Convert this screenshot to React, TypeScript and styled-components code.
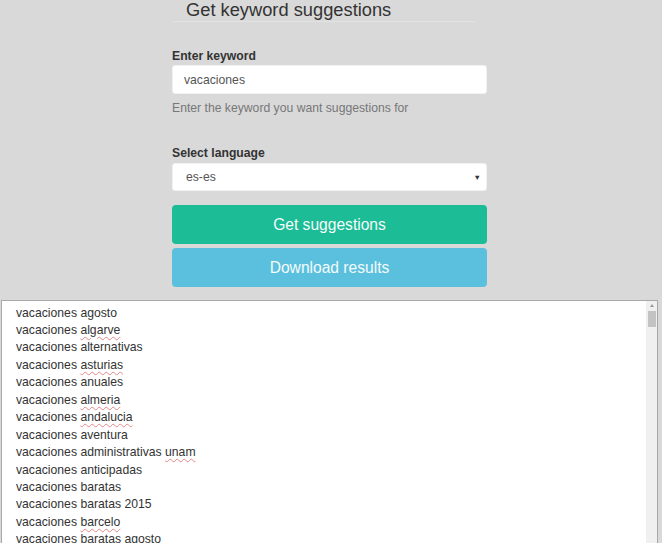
import React from "react";
import styled, { createGlobalStyle } from "styled-components";

const GlobalStyle = createGlobalStyle`
  html, body {
    margin: 0;
    padding: 0;
    background: #d9d9d9;
    overflow: hidden;
  }
  body {
    font-family: "Liberation Sans", Arial, sans-serif;
    color: #333;
  }
`;

const TYPOS = new Set(["algarve", "asturias", "almeria", "andalucia", "unam", "barcelo"]);

const LINES = [
  "vacaciones agosto",
  "vacaciones algarve",
  "vacaciones alternativas",
  "vacaciones asturias",
  "vacaciones anuales",
  "vacaciones almeria",
  "vacaciones andalucia",
  "vacaciones aventura",
  "vacaciones administrativas unam",
  "vacaciones anticipadas",
  "vacaciones baratas",
  "vacaciones baratas 2015",
  "vacaciones barcelo",
  "vacaciones baratas agosto",
  "vacaciones baratas septiembre",
  "vacaciones baratas octubre",
];

const Page = styled.div`
  display: flex;
  flex-direction: column;
  height: 543px;
`;

const Form = styled.form`
  width: 315px;
  margin: 0 0 0 172px;
  display: flex;
  flex-direction: column;
`;

const Title = styled.h3`
  margin: 0;
  width: 290px;
  padding: 0 0 2px 14px;
  font-size: 18.3px;
  font-weight: 400;
  line-height: 19px;
  color: #333;
  border-bottom: 1px solid #e2e2e2;
`;

const Label = styled.label<{ $gap: number }>`
  display: block;
  margin-top: ${(p) => p.$gap}px;
  font-size: 12.2px;
  font-weight: 700;
  line-height: 17px;
  color: #333;
`;

const Field = styled.input`
  box-sizing: border-box;
  width: 100%;
  height: 29px;
  margin: 0;
  padding: 0 0 0 11px;
  border: 1px solid #f1f1f1;
  border-radius: 3px;
  background: #fff;
  font-family: "Liberation Sans", Arial, sans-serif;
  font-size: 12.2px;
  color: #555;
  outline: none;
`;

const Help = styled.p`
  margin: 6px 0 0;
  font-size: 12.2px;
  line-height: 17px;
  color: #777;
`;

const SelectWrap = styled.div`
  position: relative;
  margin-top: 1px;

  &::after {
    content: "▼";
    position: absolute;
    right: 6px;
    top: 50%;
    transform: translateY(-50%);
    font-size: 7.5px;
    color: #333;
    pointer-events: none;
  }
`;

const Select = styled.select`
  box-sizing: border-box;
  appearance: none;
  width: 100%;
  height: 28px;
  margin: 0;
  padding: 0 0 0 13px;
  border: 1px solid #f1f1f1;
  border-radius: 3px;
  background: #fff;
  font-family: "Liberation Sans", Arial, sans-serif;
  font-size: 12.2px;
  color: #555;
  outline: none;
`;

const Button = styled.button<{ $tone: "green" | "blue"; $gap: number }>`
  height: 39px;
  margin-top: ${(p) => p.$gap}px;
  border: 0;
  border-radius: 4px;
  background: ${(p) => (p.$tone === "green" ? "#1bbc96" : "#5bc0de")};
  color: #f4fbfa;
  font-family: "Liberation Sans", Arial, sans-serif;
  font-size: 15.6px;
  cursor: pointer;
`;

const Results = styled.div`
  box-sizing: border-box;
  flex: none;
  display: flex;
  height: 262px;
  margin: 13px 4px 0 1px;
  border: 1px solid #a9a9a9;
  background: #fff;
  overflow: hidden;
`;

const List = styled.div`
  flex: 1;
  min-width: 0;
  overflow: hidden;
  padding: 3.5px 0 0 14px;
  font-size: 12.2px;
  line-height: 17.46px;
  color: #333;
`;

const ScrollTrack = styled.div`
  flex: none;
  width: 11px;
  display: flex;
  flex-direction: column;
  align-items: center;
  background: #f0f0f0;
`;

const ScrollArrow = styled.div`
  width: 100%;
  height: 9px;
  display: flex;
  align-items: center;
  justify-content: center;

  &::before {
    content: "";
    border-left: 2.5px solid transparent;
    border-right: 2.5px solid transparent;
    border-bottom: 3px solid #9a9a9a;
  }
`;

const ScrollThumb = styled.div`
  width: 8px;
  height: 16px;
  margin-top: 1px;
  background: #c3c3c3;
`;

const Line = styled.div`
  white-space: nowrap;
`;

const Typo = styled.span`
  text-decoration: underline wavy rgba(215, 80, 80, 0.65);
  text-decoration-thickness: 1px;
  text-underline-offset: 2px;
`;

const renderLine = (text: string) =>
  text.split(" ").map((word, i) => (
    <React.Fragment key={i}>
      {i > 0 && " "}
      {TYPOS.has(word) ? <Typo>{word}</Typo> : word}
    </React.Fragment>
  ));

export default function App() {
  return (
    <>
      <GlobalStyle />
      <Page>
        <Form onSubmit={(e) => e.preventDefault()}>
          <Title>Get keyword suggestions</Title>
          <Label $gap={26}>Enter keyword</Label>
          <Field defaultValue="vacaciones" />
          <Help>Enter the keyword you want suggestions for</Help>
          <Label $gap={28}>Select language</Label>
          <SelectWrap>
            <Select defaultValue="es-es">
              <option value="es-es">es-es</option>
              <option value="en-us">en-us</option>
            </Select>
          </SelectWrap>
          <Button type="submit" $tone="green" $gap={14}>
            Get suggestions
          </Button>
          <Button type="button" $tone="blue" $gap={4}>
            Download results
          </Button>
        </Form>
        <Results>
          <List>
            {LINES.map((l, i) => (
              <Line key={i}>{renderLine(l)}</Line>
            ))}
          </List>
          <ScrollTrack>
            <ScrollArrow />
            <ScrollThumb />
          </ScrollTrack>
        </Results>
      </Page>
    </>
  );
}
